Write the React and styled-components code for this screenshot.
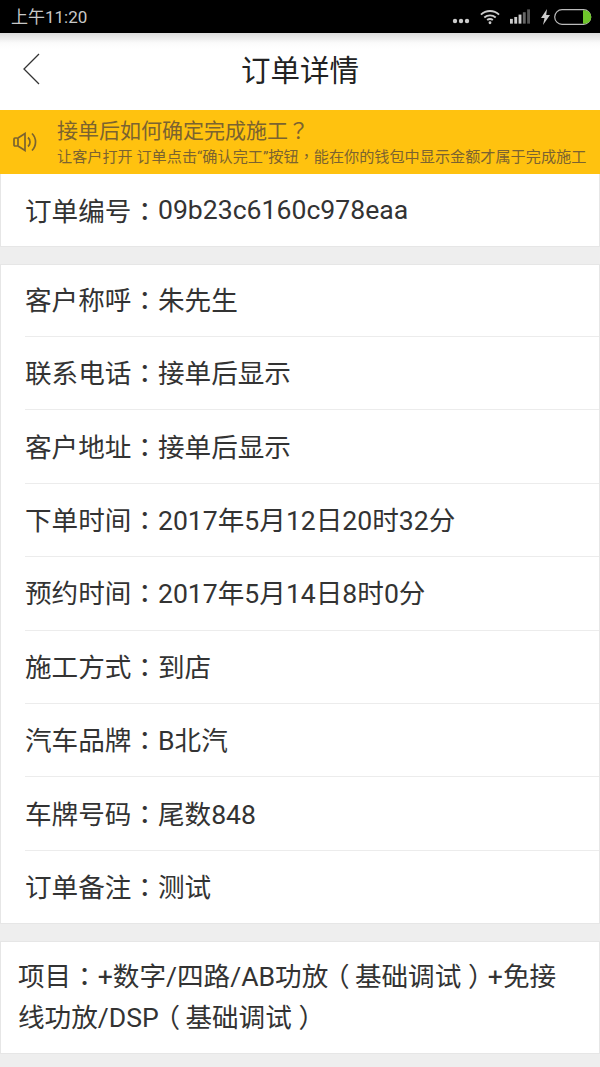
import styled, { createGlobalStyle } from "styled-components";

const GlobalStyle = createGlobalStyle`
  html, body {
    margin: 0;
    padding: 0;
    background: #eeeeee;
  }
  body {
    font-family: "Roboto", "Noto Sans CJK SC", sans-serif;
  }
`;

const Page = styled.div`
  width: 600px;
  height: 1067px;
  overflow: hidden;
  background: #eeeeee;
  color: #333333;
`;

const StatusBar = styled.div`
  height: 33px;
  box-sizing: border-box;
  background: #000000;
  display: flex;
  align-items: center;
  justify-content: space-between;
  padding: 0 8px 0 11px;
  color: #c8c8c8;
  font-size: 17px;
  svg {
    display: block;
  }
`;

const StatusTime = styled.span`
  margin-bottom: 3px;
`;

const StatusIcons = styled.div`
  display: flex;
  align-items: center;
`;

const Dots = styled.svg`
  margin: 9px 10px 0 0;
`;

const Wifi = styled.svg`
  margin-right: 10px;
`;

const Signal = styled.svg`
  margin-right: 10px;
`;

const Bolt = styled.svg`
  margin-right: 3px;
`;

const Header = styled.div`
  height: 77px;
  box-sizing: border-box;
  padding-bottom: 8px;
  background: linear-gradient(#dcdcdc 0, #fbfbfb 10px, #ffffff 16px);
  display: flex;
  align-items: center;
  justify-content: center;
  position: relative;
  font-size: 29.5px;
  color: #222222;
`;

const BackIcon = styled.svg`
  position: absolute;
  left: 22px;
  top: 20px;
`;

const Notice = styled.div`
  height: 64px;
  background: #ffc20f;
  display: flex;
  align-items: center;
  padding-left: 13px;
  color: #7b6330;
`;

const NoticeText = styled.div`
  margin-left: 18px;
  white-space: nowrap;
`;

const NoticeTitle = styled.div`
  font-size: 21px;
  line-height: 29px;
`;

const NoticeSub = styled.div`
  font-size: 15.15px;
  line-height: 22px;
`;

// centred full-width punctuation comes from the TC cut, Roboto stays first to keep line metrics
const Punct = styled.span`
  font-family: "Roboto", "Noto Sans CJK TC", sans-serif;
`;

const OpenParen = styled(Punct)`
  margin-left: -0.2em;
  margin-right: 0.2em;
`;

const CloseParen = styled(Punct)`
  margin-left: 0.25em;
  margin-right: -0.25em;
`;

const Card = styled.div`
  background: #ffffff;
  border: 1px solid #e6e6e6;
  border-top: ${(p) => (p.$flush ? "none" : "1px solid #e6e6e6")};
  margin-bottom: 16.5px;
  box-sizing: border-box;
`;

const Row = styled.div`
  height: 73.4px;
  margin-left: 24px;
  padding-bottom: 3px;
  display: flex;
  align-items: center;
  box-sizing: border-box;
  font-size: 26.6px;
  color: #333333;
  white-space: pre;
  &:first-child {
    height: 71.5px;
  }
  & + & {
    border-top: 1px solid #ececec;
  }
`;

const OrderRow = styled(Row)`
  padding-bottom: 1px;
  &:first-child {
    height: 72px;
  }
`;

const ProjectText = styled.div`
  padding: 14px 30px 15px 17px;
  font-size: 26.6px;
  line-height: 41px;
  height: 111px;
  box-sizing: border-box;
  color: #333333;
`;

const rows = [
  ["客户称呼", "朱先生"],
  ["联系电话", "接单后显示"],
  ["客户地址", "接单后显示"],
  ["下单时间", "2017年5月12日20时32分"],
  ["预约时间", "2017年5月14日8时0分"],
  ["施工方式", "到店"],
  ["汽车品牌", "B北汽"],
  ["车牌号码", "尾数848"],
  ["订单备注", "测试"],
];

export default function App() {
  return (
    <Page>
      <GlobalStyle />
      <StatusBar>
        <StatusTime>上午11:20</StatusTime>
        <StatusIcons>
          <Dots width="18" height="6" viewBox="0 0 18 6">
            <circle cx="3" cy="3" r="2.2" fill="#ccc" />
            <circle cx="9" cy="3" r="2.2" fill="#ccc" />
            <circle cx="15" cy="3" r="2.2" fill="#ccc" />
          </Dots>
          <Wifi width="20" height="16" viewBox="0 0 21 16" fill="none" stroke="#ccc" strokeWidth="2">
            <path d="M1 5.500C6.500 .5 14.500 .5 20 5.500" />
            <path d="M4.500 8.500C8 5.500 13 5.500 16.500 8.500" />
            <path d="M7.500 11.200C9.300 9.800 11.700 9.800 13.500 11.200" />
            <circle cx="10.500" cy="14" r="1.500" fill="#ccc" stroke="none" />
          </Wifi>
          <Signal width="20" height="15" viewBox="0 0 21 15">
            <rect x="0" y="10" width="3" height="5" fill="#ccc" />
            <rect x="4.500" y="8" width="3" height="7" fill="#ccc" />
            <rect x="9" y="5.500" width="3" height="9.500" fill="#ccc" />
            <rect x="13.500" y="3" width="3" height="12" fill="#666" />
            <rect x="18" y="0" width="3" height="15" fill="#555" />
          </Signal>
          <Bolt width="11" height="16" viewBox="0 0 11 16">
            <path d="M7 0L1 9h3.500L3 16l7-10H6.200z" fill="#ccc" />
          </Bolt>
          <svg width="38" height="16" viewBox="0 0 38 16">
            <rect x="0.700" y="0.700" width="36" height="14.600" rx="7.300" fill="none" stroke="#bbb" strokeWidth="1.200" />
            <path d="M29 1.200h1.500a6.800 6.800 0 0 1 0 13.600H29z" fill="#6fc52b" />
          </svg>
        </StatusIcons>
      </StatusBar>
      <Header>
        <BackIcon width="20" height="32" viewBox="0 0 20 32" fill="none" stroke="#333" strokeWidth="1.300">
          <path d="M17 1L2 16l15 15" />
        </BackIcon>
        订单详情
      </Header>
      <Notice>
        <svg width="26" height="20" viewBox="0 0 26 20" fill="none" stroke="#7b6330" strokeWidth="1.700">
          <rect x="1" y="6" width="4" height="8" rx="1" />
          <path d="M5 6l7-4.500v17L5 14" />
          <path d="M15 5.500a6 6 0 0 1 0 9" />
          <path d="M19 1.500a12 12 0 0 1 0 17" />
        </svg>
        <NoticeText>
          <NoticeTitle>
            接单后如何确定完成施工<Punct>？</Punct>
          </NoticeTitle>
          <NoticeSub>
            让客户打开 订单点击“确认完工”按钮<Punct>，</Punct>能在你的钱包中显示金额才属于完成施工
          </NoticeSub>
        </NoticeText>
      </Notice>
      <Card $flush>
        <OrderRow>
          订单编号<Punct>：</Punct>09b23c6160c978eaa
        </OrderRow>
      </Card>
      <Card>
        {rows.map(([label, value]) => (
          <Row key={label}>
            {label}
            <Punct>：</Punct>
            {value}
          </Row>
        ))}
      </Card>
      <Card>
        <ProjectText>
          项目<Punct>：</Punct>+数字/四路/AB功放<OpenParen>（</OpenParen>基础调试<CloseParen>）</CloseParen>+免接线功放/DSP
          <OpenParen>（</OpenParen>基础调试<CloseParen>）</CloseParen>
        </ProjectText>
      </Card>
    </Page>
  );
}
